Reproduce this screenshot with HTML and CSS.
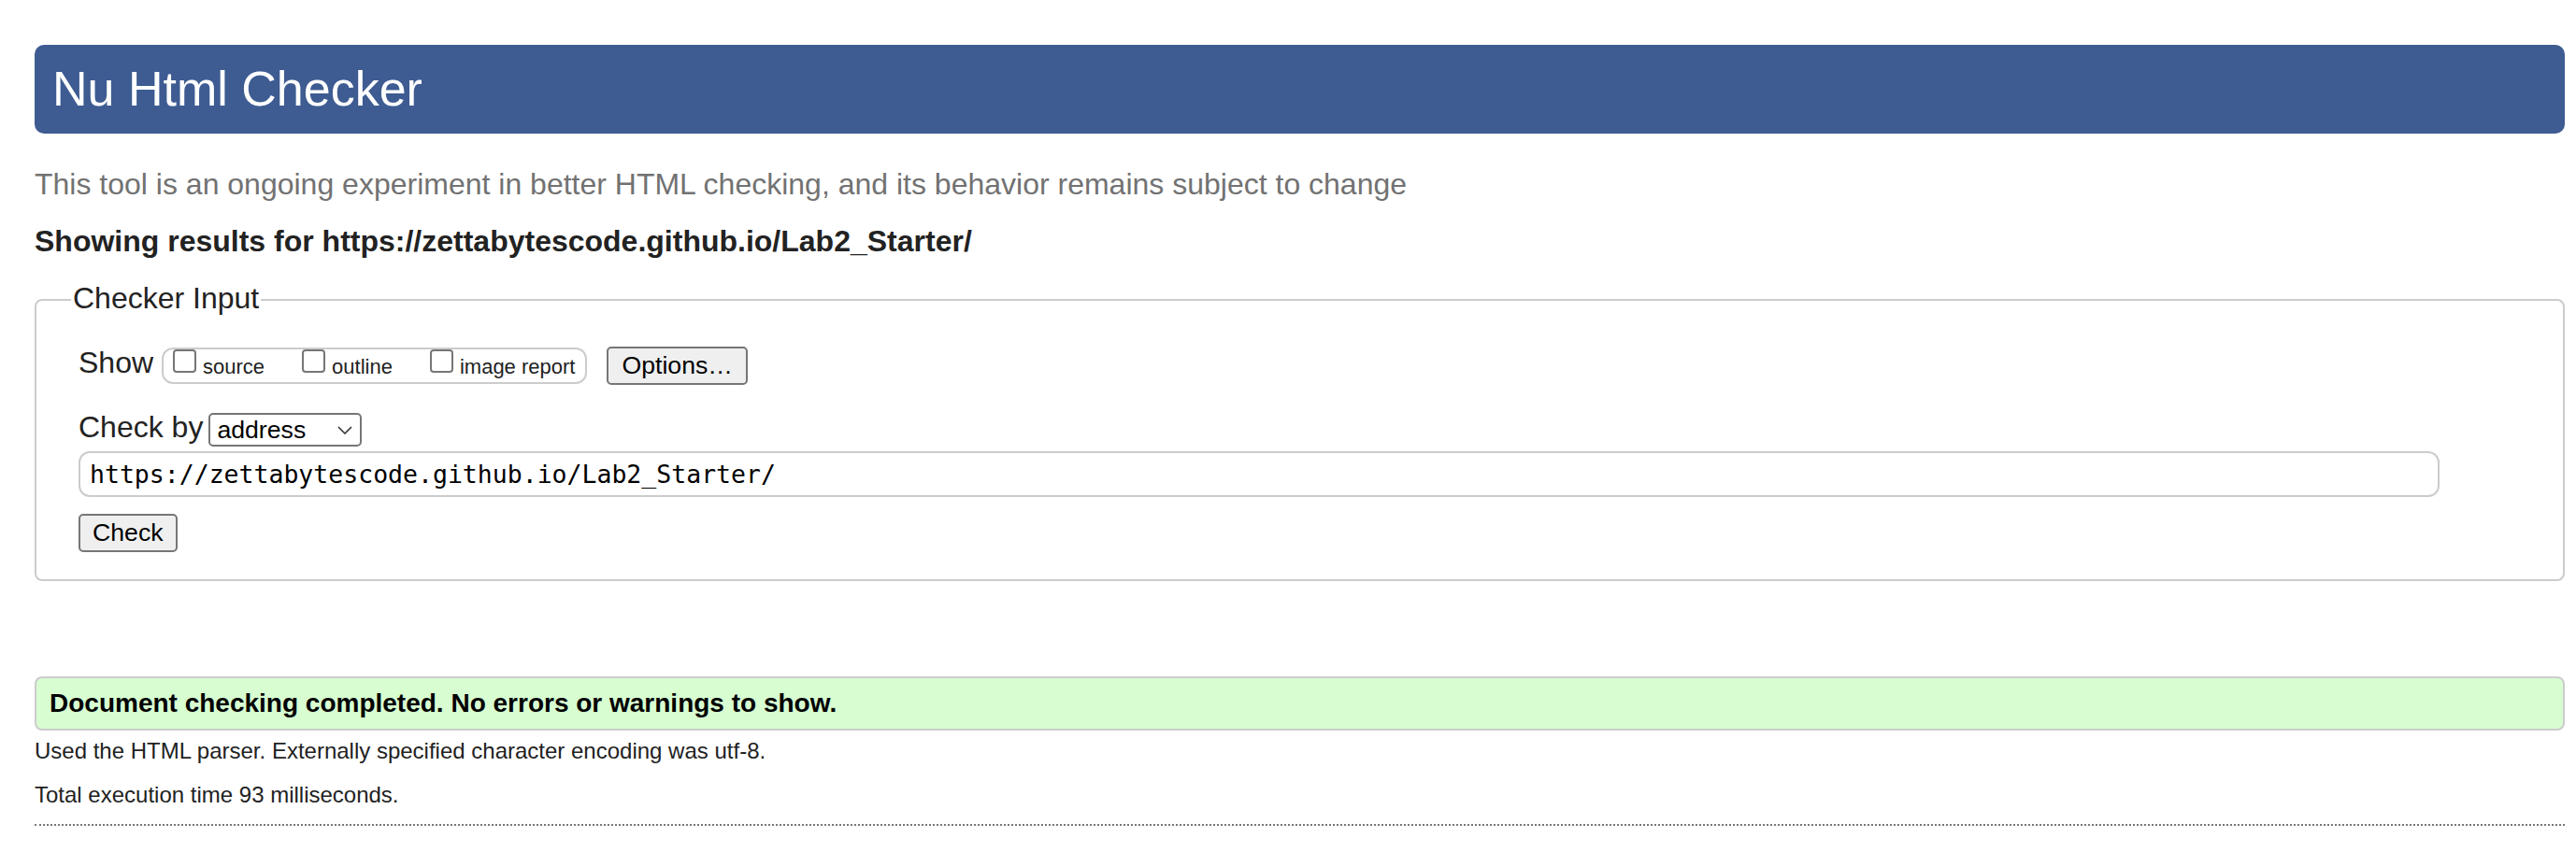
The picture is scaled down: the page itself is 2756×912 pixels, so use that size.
FILE: index.html
```html
<!DOCTYPE html>
<html lang="en">
<head>
<meta charset="utf-8">
<title>Nu Html Checker</title>
<link rel="stylesheet" href="styles.css">
</head>
<body>
<main class="page">
  <h1 class="banner">Nu Html Checker</h1>
  <p class="tagline">This tool is an ongoing experiment in better HTML checking, and its behavior remains subject to change</p>
  <p class="showing">Showing results for https://zettabytescode.github.io/Lab2_Starter/</p>
  <form class="checker">
    <fieldset class="checker-input">
      <legend class="legend">Checker Input</legend>
      <div class="row row-show">
        <span class="row-label">Show</span>
        <span class="pill">
          <label class="opt"><input type="checkbox" class="box"><span class="opt-text">source</span></label>
          <label class="opt"><input type="checkbox" class="box"><span class="opt-text">outline</span></label>
          <label class="opt"><input type="checkbox" class="box"><span class="opt-text">image report</span></label>
        </span>
        <button type="button" class="btn btn-options">Options…</button>
      </div>
      <div class="row row-by">
        <span class="row-label by-label">Check by</span>
        <select class="select"><option>address</option></select>
      </div>
      <input class="url" type="url" value="https://zettabytescode.github.io/Lab2_Starter/">
      <button class="btn btn-check" type="button">Check</button>
    </fieldset>
  </form>
  <p class="success">Document checking completed. No errors or warnings to show.</p>
  <p class="meta meta-first">Used the HTML parser. Externally specified character encoding was utf-8.</p>
  <p class="meta meta-second">Total execution time 93 milliseconds.</p>
  <hr class="rule">
</main>
</body>
</html>
```

FILE: styles.css
```css
html, body {
  margin: 0;
  padding: 0;
  background: #ffffff;
}

body {
  font-family: "Liberation Sans", Arial, Helvetica, sans-serif;
  color: #222222;
}

.page {
  margin: 0 12px 0 37px;
  padding-top: 48px;
}

.banner {
  margin: 0;
  height: 95px;
  line-height: 95px;
  padding: 0 19px;
  font-size: 52px;
  font-weight: normal;
  color: #ffffff;
  background: #3e5c92;
  border-radius: 10px;
}

.tagline {
  margin: 35px 0 0;
  font-size: 32px;
  line-height: 38px;
  color: #727272;
}

.showing {
  margin: 23px 0 0;
  font-size: 32px;
  line-height: 38px;
  font-weight: bold;
  color: #222222;
}

.checker {
  margin: 0;
}

.checker-input {
  margin: 26px 0 0;
  padding: 33px 45px 29px;
  border: 2px solid #cccccc;
  border-radius: 8px;
  min-inline-size: 0;
}

.legend {
  margin-left: -8px;
  padding: 0 2px 3px;
  font-size: 32px;
  line-height: 32px;
  color: #222222;
}

.row {
  display: flex;
  align-items: flex-start;
}

.row-show {
  height: 41px;
}

.row-by {
  margin-top: 30px;
  height: 36px;
}

.row-label {
  font-size: 32px;
  line-height: 35px;
  color: #222222;
}

.by-label {
  line-height: 30px;
  margin-right: 6px;
}

.pill {
  display: inline-flex;
  align-items: flex-start;
  box-sizing: border-box;
  height: 39px;
  margin: 1px 0 0 9px;
  padding: 0 11px 0 10px;
  border: 2px solid #cccccc;
  border-radius: 12px;
}

.opt {
  display: flex;
  align-items: flex-start;
  margin-right: 40px;
}

.opt:last-child {
  margin-right: 0;
}

.box {
  -webkit-appearance: none;
  appearance: none;
  box-sizing: border-box;
  width: 25px;
  height: 25px;
  margin: 0;
  border: 2px solid #767676;
  border-radius: 4px;
  background: #ffffff;
}

.opt-text {
  margin: 1px 0 0 7px;
  font-size: 22px;
  line-height: 35px;
  color: #222222;
}

.btn {
  box-sizing: border-box;
  height: 41px;
  font-family: "Liberation Sans", Arial, Helvetica, sans-serif;
  font-size: 26.67px;
  line-height: 37px;
  color: #000000;
  background: #efefef;
  border: 2px solid #767676;
  border-radius: 5px;
}

.btn-options {
  margin-left: 21px;
  padding: 0 14px;
}

.btn-check {
  display: block;
  margin-top: 18px;
  padding: 0 13px;
}

.select {
  -webkit-appearance: none;
  appearance: none;
  box-sizing: border-box;
  width: 164px;
  height: 36px;
  margin: 0;
  padding: 0 0 0 7px;
  font-family: "Liberation Sans", Arial, Helvetica, sans-serif;
  font-size: 26.67px;
  color: #000000;
  border: 2px solid #767676;
  border-radius: 5px;
  background: #ffffff url("data:image/svg+xml,%3Csvg xmlns='http://www.w3.org/2000/svg' width='16' height='9' viewBox='0 0 16 9'%3E%3Cpath d='M1 1l7 7 7-7' fill='none' stroke='%23333333' stroke-width='1.6'/%3E%3C/svg%3E") no-repeat right 8px center;
}

.url {
  display: block;
  box-sizing: border-box;
  width: 2526px;
  height: 49px;
  margin: 5px 0 0;
  padding: 0 10px;
  font-family: "DejaVu Sans Mono", "Liberation Mono", monospace;
  font-size: 26.5px;
  color: #000000;
  border: 2px solid #cccccc;
  border-radius: 12px;
  background: #ffffff;
  outline: none;
}

.success {
  box-sizing: border-box;
  height: 58px;
  margin: 102px 0 0;
  padding: 0 14px;
  font-size: 28px;
  line-height: 54px;
  font-weight: bold;
  color: #000000;
  background: #d7fdd1;
  border: 2px solid #cccccc;
  border-radius: 8px;
}

.meta {
  margin: 0;
  font-size: 24px;
  line-height: 28px;
  color: #222222;
}

.meta-first {
  margin-top: 8px;
}

.meta-second {
  margin-top: 19px;
}

.rule {
  margin: 17px 0 0;
  height: 0;
  border: 0;
  border-top: 2px dotted #777777;
}
```
